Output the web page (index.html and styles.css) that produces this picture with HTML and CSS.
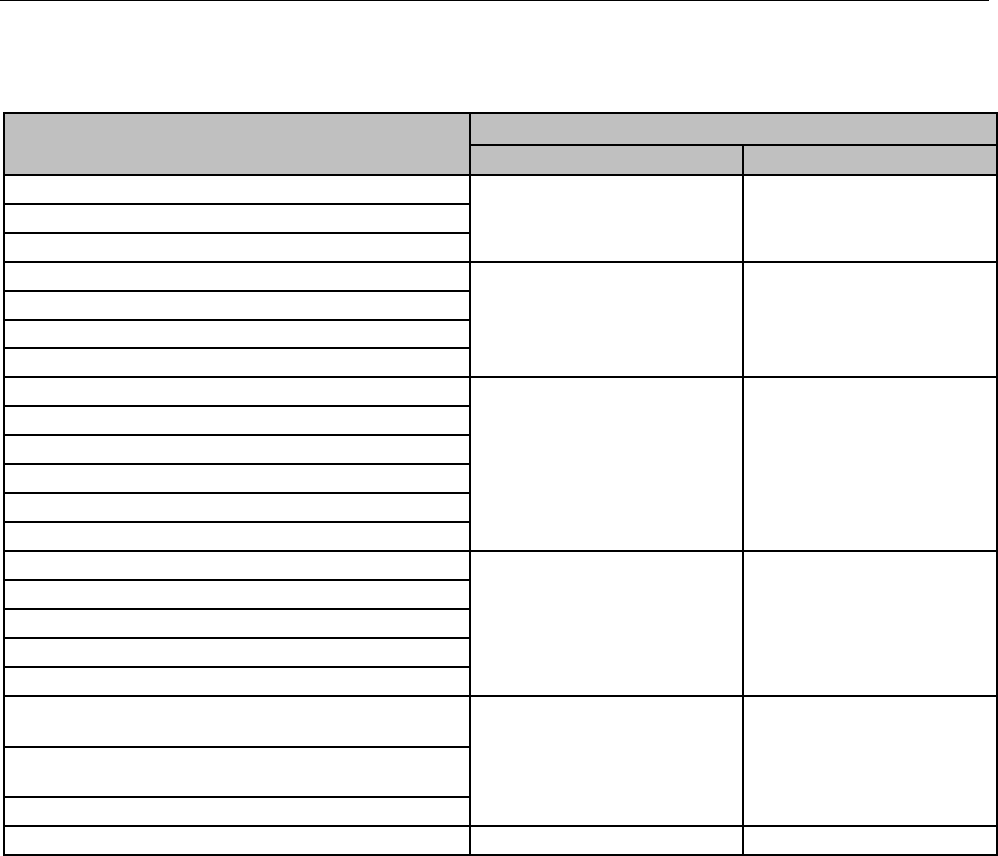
FILE: index.html
```html
<!DOCTYPE html>
<html>
<head>
<meta charset="utf-8">
<link rel="stylesheet" href="styles.css">
</head>
<body>
<div class="rule"></div>
<table class="grid">
  <colgroup>
    <col class="c1"><col class="c2"><col class="c3">
  </colgroup>
  <thead>
    <tr class="h1"><th rowspan="2"></th><th colspan="2"></th></tr>
    <tr class="h2"><th></th><th></th></tr>
  </thead>
  <tbody>
    <tr><td></td><td rowspan="3"></td><td rowspan="3"></td></tr>
    <tr><td></td></tr>
    <tr><td></td></tr>

    <tr><td></td><td rowspan="4"></td><td rowspan="4"></td></tr>
    <tr><td></td></tr>
    <tr class="short"><td></td></tr>
    <tr><td></td></tr>

    <tr><td></td><td rowspan="6"></td><td rowspan="6"></td></tr>
    <tr><td></td></tr>
    <tr><td></td></tr>
    <tr><td></td></tr>
    <tr><td></td></tr>
    <tr><td></td></tr>

    <tr><td></td><td rowspan="5"></td><td rowspan="5"></td></tr>
    <tr><td></td></tr>
    <tr><td></td></tr>
    <tr><td></td></tr>
    <tr><td></td></tr>

    <tr class="tall tall-first"><td></td><td rowspan="3"></td><td rowspan="3"></td></tr>
    <tr class="tall"><td></td></tr>
    <tr><td></td></tr>

    <tr><td></td><td></td><td></td></tr>
  </tbody>
</table>
</body>
</html>
```

FILE: styles.css
```css
html, body {
  margin: 0;
  padding: 0;
  background: #ffffff;
  font-family: "Liberation Sans", Arial, sans-serif;
}

.rule {
  width: 989px;
  height: 1px;
  background: #000000;
}

.grid {
  margin: 111px 0 0 3px;
  border-collapse: collapse;
  table-layout: fixed;
  width: 993px;
}

.c1 { width: 466px; }
.c2 { width: 273px; }
.c3 { width: 254px; }

.grid th,
.grid td {
  border: 2px solid #000000;
  padding: 0;
}

.grid th {
  background: #c0c0c0;
}

.h1 { height: 32px; }
.h2 { height: 30px; }

.grid tbody tr { height: 29px; }
.grid tbody tr.short { height: 28px; }
.grid tbody tr.tall { height: 50px; }
.grid tbody tr.tall-first { height: 51px; }
```
